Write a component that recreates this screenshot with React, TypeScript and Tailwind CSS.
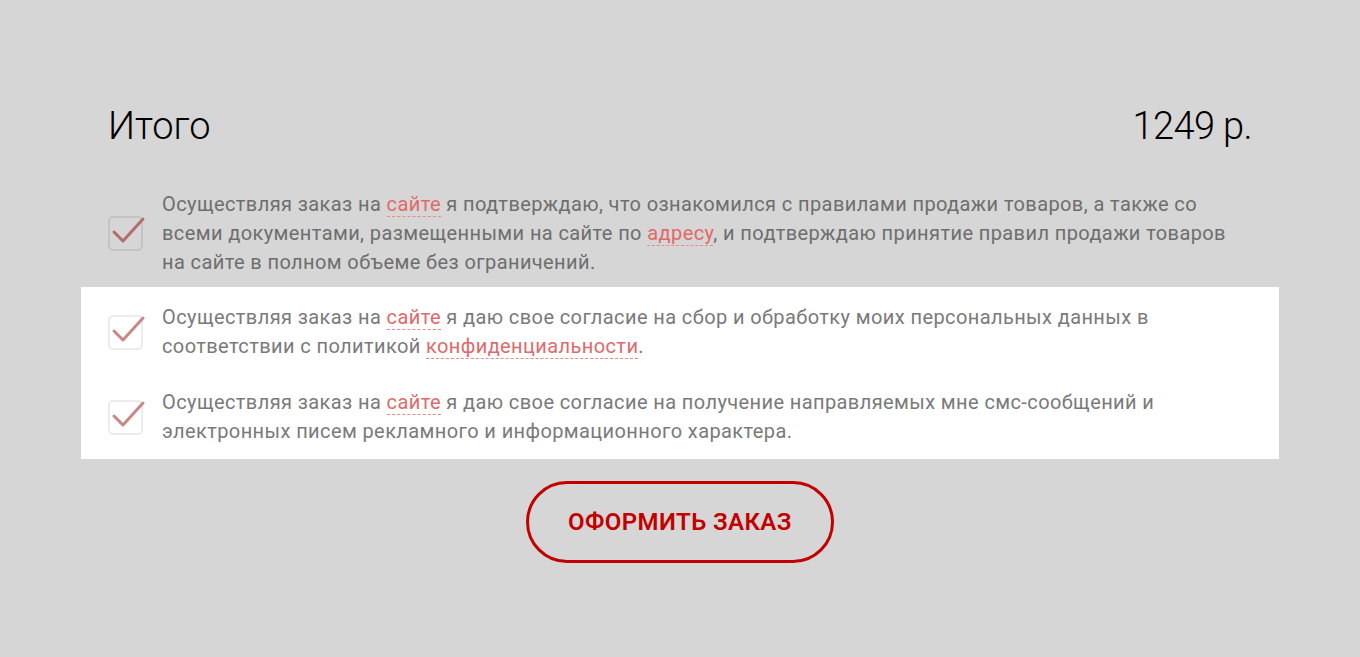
import React from "react";

const Link = ({ children }: { children: React.ReactNode }) => (
  <span className="text-[#e06a6a] border-b border-dashed border-[#e88a8a]">
    {children}
  </span>
);

const Check = ({ onWhite }: { onWhite?: boolean }) => (
  <div className="relative w-[35px] h-[35px] shrink-0">
    <div
      className={
        "absolute inset-0 rounded-[5px] border-2 " +
        (onWhite ? "border-[#ececec]" : "border-[#c4c4c4]")
      }
    />
    <svg className="absolute left-[2px] top-[-3px]" width="36" height="34" viewBox="0 0 36 34">
      <path
        d="M4 19 L13 28 L33 6"
        fill="none"
        stroke={onWhite ? "#c88888" : "#b56c6f"}
        strokeWidth="3"
        strokeLinecap="round"
        strokeLinejoin="round"
      />
    </svg>
  </div>
);

export default function App() {
  return (
    <div
      className="w-[1360px] h-[657px] bg-[#d6d6d6] overflow-hidden"
      style={{ fontFamily: "Roboto, 'Noto Sans', sans-serif" }}
    >
      <div className="pt-[104px] px-[108px] flex justify-between items-baseline">
        <div className="text-[38px] font-light text-black leading-[44px]">Итого</div>
        <div className="text-[38px] font-light text-black leading-[44px] tracking-[-0.6px]">1249 р.</div>
      </div>

      <div className="mt-[42px] px-[108px] flex items-center gap-[19px] text-[20px] leading-[29px] text-[#6e6e6e] tracking-[0.4px]">
        <Check />
        <div>
          Осуществляя заказ на <Link>сайте</Link> я подтверждаю, что ознакомился с правилами продажи товаров, а также со
          <br />
          всеми документами, размещенными на сайте по <Link>адресу</Link>, и подтверждаю принятие правил продажи товаров
          <br />
          на сайте в полном объеме без ограничений.
        </div>
      </div>

      <div className="mt-[10px] mx-[81px] bg-white px-[27px] pt-[16px] pb-[13px] flex flex-col gap-[27px] text-[20px] leading-[29px] text-[#7a7a7a] tracking-[0.4px]">
        <div className="flex items-center gap-[19px]">
          <Check onWhite />
          <div>
            Осуществляя заказ на <Link>сайте</Link> я даю свое согласие на сбор и обработку моих персональных данных в
            <br />
            соответствии с политикой <Link>конфиденциальности</Link>.
          </div>
        </div>
        <div className="flex items-center gap-[19px]">
          <Check onWhite />
          <div>
            Осуществляя заказ на <Link>сайте</Link> я даю свое согласие на получение направляемых мне смс-сообщений и
            <br />
            электронных писем рекламного и информационного характера.
          </div>
        </div>
      </div>

      <div className="mt-[22px] flex justify-center">
        <button className="w-[308px] h-[82px] rounded-full border-[3px] border-[#c20000] text-[#c20000] text-[24px] font-semibold tracking-[0.4px]">
          ОФОРМИТЬ ЗАКАЗ
        </button>
      </div>
    </div>
  );
}
